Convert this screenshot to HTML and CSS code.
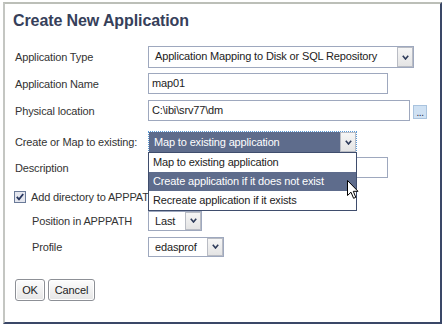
FILE: index.html
```html
<!DOCTYPE html>
<html>
<head>
<meta charset="utf-8">
<title>Create New Application</title>
<link rel="stylesheet" href="styles.css">
</head>
<body>
<div class="frame">
  <h1 class="title">Create New Application</h1>
  <div class="form">
    <div class="row r1">
      <span class="label">Application Type</span>
      <div class="select w-type"><span class="val">Application Mapping to Disk or SQL Repository</span><span class="arrow"><svg width="7" height="5" viewBox="0 0 7 5"><path d="M0.8 0.8 L3.5 4 L6.2 0.8" fill="none" stroke="#2e3b5a" stroke-width="1.6"/></svg></span></div>
    </div>
    <div class="row r2">
      <span class="label">Application Name</span>
      <div class="input w-name">map01</div>
    </div>
    <div class="row r3">
      <span class="label">Physical location</span>
      <div class="input w-path">C:\ibi\srv77\dm</div>
      <span class="browse">...</span>
    </div>
    <div class="row r4">
      <span class="label">Create or Map to existing:</span>
      <div class="combo">
        <div class="select focus w-create"><span class="val">Map to existing application</span><span class="arrow"><svg width="7" height="5" viewBox="0 0 7 5"><path d="M0.8 0.8 L3.5 4 L6.2 0.8" fill="none" stroke="#2e3b5a" stroke-width="1.6"/></svg></span></div>
        <ul class="menu">
          <li>Map to existing application</li>
          <li class="hover">Create application if it does not exist</li>
          <li>Recreate application if it exists</li>
        </ul>
      </div>
    </div>
    <div class="row r5">
      <span class="label">Description</span>
      <div class="input w-name"></div>
    </div>
    <div class="row r6">
      <span class="check"><svg width="12" height="12" viewBox="0 0 12 12"><rect x="0.5" y="0.5" width="11" height="11" fill="#e4e6ee" stroke="#6a7a98"/><path d="M2.8 5.8 L5 8.3 L9.2 3" fill="none" stroke="#27365e" stroke-width="1.8"/></svg></span>
      <span class="check-label">Add directory to APPPATH</span>
    </div>
    <div class="row r7 sub">
      <span class="label">Position in APPPATH</span>
      <div class="select w-pos"><span class="val">Last</span><span class="arrow"><svg width="7" height="5" viewBox="0 0 7 5"><path d="M0.8 0.8 L3.5 4 L6.2 0.8" fill="none" stroke="#2e3b5a" stroke-width="1.6"/></svg></span></div>
    </div>
    <div class="row r8 sub">
      <span class="label">Profile</span>
      <div class="select w-prof"><span class="val">edasprof</span><span class="arrow"><svg width="7" height="5" viewBox="0 0 7 5"><path d="M0.8 0.8 L3.5 4 L6.2 0.8" fill="none" stroke="#2e3b5a" stroke-width="1.6"/></svg></span></div>
    </div>
    <div class="buttons">
      <button class="btn btn-ok">OK</button>
      <button class="btn btn-cancel">Cancel</button>
    </div>
  </div>
  <svg class="cursor" width="13" height="20" viewBox="0 0 13 20"><path d="M0.5 0.5 L0.5 15.5 L4 12.2 L6.6 18.3 L8.8 17.3 L6.3 11.3 L11 11.3 Z" fill="#fff" stroke="#000" stroke-width="1" stroke-linejoin="miter"/></svg>
</div>
</body>
</html>
```
FILE: styles.css
```css
* { box-sizing: border-box; }
html, body { margin: 0; padding: 0; background: #fff; }
body {
  font-family: "Liberation Sans", Arial, sans-serif;
  font-size: 11px;
  color: #333;
  letter-spacing: -0.15px;
}
.frame {
  position: relative;
  margin: 2px 0 0 3px;
  width: 439px;
  height: 322px;
  border-top: 2px solid #bcbfb8;
  border-left: 2px solid #c4c6c2;
  border-right: 2px solid #3a4767;
  border-bottom: 2px solid #3a4767;
  background: #fff;
}
.title {
  margin: 7px 0 15px 8px;
  font-size: 16px;
  line-height: 20px;
  font-weight: bold;
  color: #36405a;
  letter-spacing: -0.1px;
}
.form {
  display: flex;
  flex-direction: column;
  padding-left: 10px;
}
.row {
  display: flex;
  align-items: center;
  height: 21px;
}
.r1 { height: 22px; }
.r2 { margin-top: 5px; }
.r3 { margin-top: 6px; }
.r4 { margin-top: 10px; height: 22px; }
.r5 { margin-top: 4px; }
.r6 { margin-top: 9px; height: 20px; }
.r7 { margin-top: 3px; }
.r8 { margin-top: 5px; }
.label {
  width: 133px;
  flex: none;
  color: #333;
}
.sub .label { padding-left: 17px; }
.input {
  height: 21px;
  border: 1px solid #9ea8be;
  padding: 0 4px 0 3px;
  line-height: 19px;
  color: #222;
  background: #fff;
}
.w-name { width: 240px; }
.w-path { width: 262px; }
.browse {
  margin-left: 3px;
  width: 14px;
  height: 14px;
  background: #cfe1f3;
  border: 1px solid #a9c3de;
  color: #1e2a44;
  font-size: 10px;
  line-height: 14px;
  text-align: center;
  letter-spacing: -0.5px;
  overflow: hidden;
  margin-top: 2px;
}
.select {
  display: flex;
  align-items: stretch;
  border: 1px solid #9ea8be;
  background: #fff;
  color: #222;
}
.r1 .select { height: 22px; }
.r7 .select, .r8 .select { height: 20px; }
.select .val {
  flex: 1;
  padding-left: 6px;
  line-height: 18px;
  white-space: nowrap;
  overflow: hidden;
}
.r1 .select .val { line-height: 19px; }
.arrow {
  flex: none;
  width: 16px;
  margin: 0 0 0 0;
  background: linear-gradient(#f6f6f6, #e4e4e4);
  border: 1px solid #b9bcc4;
  display: flex;
  align-items: center;
  justify-content: center;
}
.w-type { width: 266px; }
.w-create { width: 209px; }
.w-pos { width: 54px; }
.w-prof { width: 76px; }
.combo { position: relative; }
.select.focus {
  height: 22px;
  border: 1px dotted #5b9bd8;
}
.select.focus .val {
  background: #5e6c8c;
  color: #fff;
  padding-left: 5px;
  line-height: 20px;
}
.menu {
  position: absolute;
  left: 0;
  top: 21px;
  width: 209px;
  margin: 0;
  padding: 0;
  list-style: none;
  border: 1px solid #3f4d6d;
  background: #fff;
  z-index: 2;
}
.menu li {
  height: 19px;
  line-height: 19px;
  padding-left: 4px;
  color: #222;
  white-space: nowrap;
}
.menu li.hover {
  background: #5e6c8c;
  color: #fff;
}
.check {
  display: flex;
  width: 12px;
  height: 12px;
  margin-left: -1px;
}
.check-label {
  margin-left: 5px;
  white-space: nowrap;
}
.buttons {
  display: flex;
  gap: 3px;
  margin-top: 22px;
}
.btn {
  height: 22px;
  padding: 0;
  border: 1px solid #8d9096;
  border-radius: 3px;
  background: linear-gradient(#fdfdfd, #e6e6e6);
  box-shadow: inset 0 0 0 1px #fff;
  font-family: "Liberation Sans", Arial, sans-serif;
  font-size: 11px;
  color: #222;
  letter-spacing: -0.15px;
}
.btn-ok { width: 30px; }
.btn-cancel { width: 47px; }
.cursor {
  position: absolute;
  left: 342px;
  top: 176px;
  z-index: 3;
}
```
